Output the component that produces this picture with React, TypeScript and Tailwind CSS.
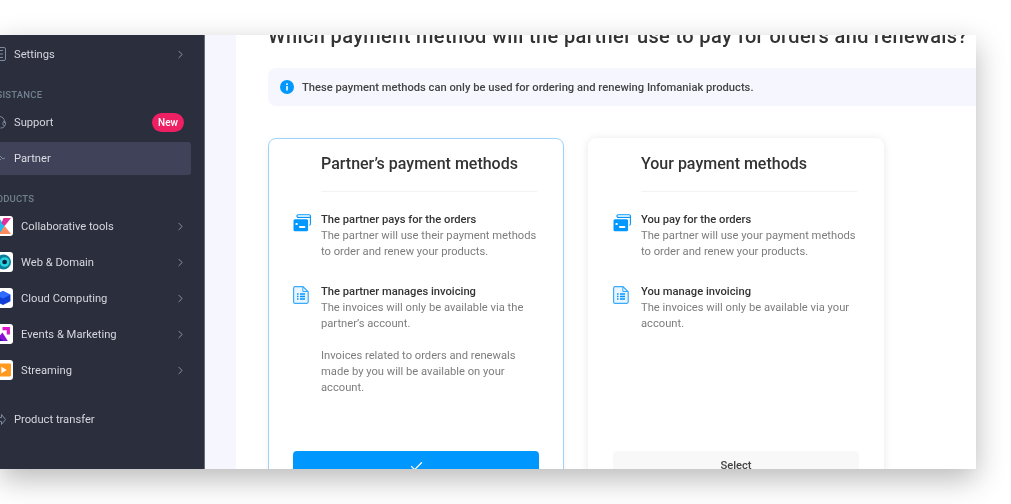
import { ChevronRight, Check } from 'lucide-react'

const font = { fontFamily: 'Roboto, "Liberation Sans", sans-serif' }

function CardsIcon() {
  return (
    <svg width="18" height="18" viewBox="0 0 18 18" fill="none">
      <path d="M4 3V2a1.2 1.2 0 0 1 1.2-1.2h11A1.2 1.2 0 0 1 17.4 2v8a1.2 1.2 0 0 1-1.2 1.2" stroke="#0098ff" strokeWidth="1.1" />
      <path d="M4 3.4h13" stroke="#0098ff" strokeWidth="1.2" />
      <rect x="0.5" y="5.2" width="14.6" height="12" rx="1.5" fill="#0098ff" />
      <rect x="2.6" y="9" width="2" height="2" fill="#fff" />
      <rect x="6.2" y="12" width="6" height="2" fill="#fff" />
    </svg>
  )
}

function InvoiceIcon() {
  return (
    <svg width="16" height="18" viewBox="0 0 16 18" fill="none">
      <path d="M2 .7h8l5.2 5v10.2a1.4 1.4 0 0 1-1.4 1.4H2a1.4 1.4 0 0 1-1.4-1.4V2.100A1.4 1.4 0 0 1 2 .7Z" fill="#eaf6ff" stroke="#3aaaff" strokeWidth="1.2" />
      <path d="M9.800 .9v4.600h5" stroke="#3aaaff" strokeWidth="1" />
      <path d="M4 8h1.500M7 8h5M4 10.500h1.500M7 10.500h5M4 13h1.500M7 13h5" stroke="#0098ff" strokeWidth="1.500" />
    </svg>
  )
}

function Tile({ children }: { children: React.ReactNode }) {
  return (
    <div className="flex h-5 w-5 shrink-0 items-center justify-center overflow-hidden rounded-[3px] bg-white">
      <svg width="16" height="16" viewBox="0 0 15 15">{children}</svg>
    </div>
  )
}

const products = [
  {
    label: 'Collaborative tools',
    icon: (
      <>
        <path d="M0 0h4l5 7.500-4 7.500H0l4-7.500z" fill="#22b8f0" />
        <path d="M4 15l5-7.500L15 15H9z" fill="#ff8a5c" />
        <path d="M9 7.500L15 0H8L6 5z" fill="#e0309a" />
      </>
    ),
  },
  {
    label: 'Web & Domain',
    icon: (
      <>
        <circle cx="8" cy="7.500" r="7" fill="#0a7f9a" />
        <circle cx="9" cy="7.500" r="4.500" fill="#27d3e0" />
        <circle cx="9" cy="7.500" r="2.200" fill="#13203a" />
      </>
    ),
  },
  {
    label: 'Cloud Computing',
    icon: (
      <>
        <path d="M7.500 1l7 3.500v6l-7 3.500-7-3.500v-6z" fill="#0f3fd6" />
        <path d="M7.500 1l7 3.500-7 3.500-7-3.500z" fill="#2f6bff" />
      </>
    ),
  },
  {
    label: 'Events & Marketing',
    icon: (
      <>
        <path d="M0 14L7 6l5 8z" fill="#8a10d8" />
        <path d="M0 14l3-4 5 4z" fill="#3a10a8" />
        <path d="M7 1h7v7h-3V4H7z" fill="#e014c8" />
      </>
    ),
  },
  {
    label: 'Streaming',
    icon: (
      <>
        <rect x="0" y="1.500" width="15" height="12" rx="1" fill="#ff9a1f" />
        <rect x="0" y="1.500" width="4" height="12" fill="#f0562a" />
        <path d="M6 4.500l5 3-5 3z" fill="#fff" />
      </>
    ),
  },
]

function SimpleRow({ label, children, glyph }: { label: string; children?: React.ReactNode; glyph: React.ReactNode }) {
  return (
    <div className="flex h-9 items-center pr-[17px] text-[11.2px] text-[#d5d7de]">
      <div className="mr-[8px] flex w-[6px] justify-end text-[#7f8a9c]">{glyph}</div>
      <span className="flex-1 whitespace-nowrap pt-[2px]">{label}</span>
      {children}
    </div>
  )
}

function Section({ title, lines, extra, icon }: { title: string; lines: string[]; extra?: string[]; icon: React.ReactNode }) {
  return (
    <div className="flex gap-[10px]">
      <div className="mt-[2px] w-[18px] shrink-0">{icon}</div>
      <div className="whitespace-nowrap text-[11.2px] leading-4 text-[#7d7d7d]">
        <div className="font-medium text-[#333]">{title}</div>
        {lines.map((l) => (
          <div key={l}>{l}</div>
        ))}
        {extra && (
          <div className="mt-4">
            {extra.map((l) => (
              <div key={l}>{l}</div>
            ))}
          </div>
        )}
      </div>
    </div>
  )
}

function Card({ title, selected, children }: { title: string; selected?: boolean; children: React.ReactNode }) {
  return (
    <div
      className={
        selected
          ? 'flex w-[296px] flex-col rounded-lg border border-[#9bd4fb] bg-white px-6 pb-6 pt-[15px] shadow-[0_1px_6px_rgba(0,0,0,0.05)]'
          : 'flex w-[296px] flex-col rounded-lg border border-white bg-white px-6 pb-6 pt-[15px] shadow-[0_1px_8px_rgba(0,0,0,0.1)]'
      }
    >
      <div className="ml-[28px] mr-[2px] h-[38px] border-b border-[#f3f3f3] text-[16px] font-medium leading-5 text-[#333]">{title}</div>
      <div className="mt-[20px] flex flex-col gap-[24px] pb-[55px]">{children}</div>
      {selected ? (
        <div className="mt-auto flex h-10 items-start justify-center rounded bg-[#0098ff] pt-[8px] text-white">
          <Check size={15} />
        </div>
      ) : (
        <div className="mt-auto flex h-10 items-start justify-center rounded bg-[#f8f8f8] pt-[7px] text-[11.2px] font-medium text-[#444]">Select</div>
      )}
    </div>
  )
}

export default function App() {
  return (
    <div className="h-[504px] w-[1011px] overflow-hidden bg-white pt-[35px]" style={font}>
      <div className="flex h-[434px] w-[976px] overflow-hidden shadow-[0_10px_28px_rgba(0,0,0,0.28)]">
        <aside className="w-[205px] shrink-0 overflow-hidden border-r border-[#6a6e7c] bg-[#2b2e3c] pt-px">
          <div className="blur-[0.5px]">
            <SimpleRow
              label="Settings"
              glyph={
                <svg width="10" height="14" viewBox="0 0 10 14" fill="none" className="shrink-0" stroke="#7f8a9c">
                  <rect x="0.500" y="0.500" width="9" height="13" rx="1.500" />
                  <path d="M3 3.500h4M3 7h4M3 10.500h4" />
                </svg>
              }
            >
              <ChevronRight size={13} strokeWidth={1.5} className="text-[#a4a8b4]" />
            </SimpleRow>
            <div className="flex h-8 items-end pb-[2px] text-[9.5px] font-medium tracking-[0.2px] text-[#71808f]">
              <span className="-ml-[16px]">ASSISTANCE</span>
            </div>
            <div className="pr-[3px]">
              <SimpleRow
                label="Support"
                glyph={
                  <svg width="13" height="14" viewBox="0 0 13 14" fill="none" className="shrink-0" stroke="#7f8a9c">
                    <path d="M1.500 8V6.500a5 5 0 0 1 10 0V8" />
                    <rect x="10" y="6.500" width="2.500" height="4" rx="1" />
                    <path d="M11.500 10.500c0 2-2 2.500-4 2.500" />
                  </svg>
                }
              >
                <span className="flex h-[19px] w-[32px] items-center justify-center rounded-full bg-[#ee1f63] text-[10px] font-medium text-white">New</span>
              </SimpleRow>
            </div>
            <div className="flex h-9 items-center pr-[13px]">
              <div className="flex h-[33px] flex-1 items-center rounded-r-[3px] bg-[#3f4259] pt-[2px] text-[11.2px] text-[#dcdee5]">
                <div className="mr-[8px] flex w-[6px] justify-end">
                  <svg width="12" height="10" viewBox="0 0 12 10" fill="none" className="shrink-0" stroke="#7f8a9c">
                    <path d="M1 2h5l3 3 2-1M1 8h3l3-3" />
                  </svg>
                </div>
                Partner
              </div>
            </div>
            <div className="flex h-8 items-end pb-[2px] text-[9.5px] font-medium tracking-[0.2px] text-[#71808f]">
              <span className="-ml-[16px]">PRODUCTS</span>
            </div>
            {products.map((p) => (
              <div key={p.label} className="flex h-9 items-center pr-[17px] text-[11.2px] text-[#d5d7de]">
                <div className="-ml-[7px] mr-[8px]">
                  <Tile>{p.icon}</Tile>
                </div>
                <span className="flex-1 whitespace-nowrap pt-[2px]">{p.label}</span>
                <ChevronRight size={13} strokeWidth={1.5} className="text-[#a4a8b4]" />
              </div>
            ))}
            <div className="mt-[13px]">
              <SimpleRow
                label="Product transfer"
                glyph={
                  <svg width="8" height="13" viewBox="0 0 8 13" fill="none" className="shrink-0" stroke="#7f8a9c">
                    <path d="M1 4.500h2.500V1.500L7.500 6.500l-4 5V8.500H1z" />
                  </svg>
                }
              />
            </div>
          </div>
        </aside>

        <main className="min-w-0 flex-1 overflow-hidden bg-[#f6f6fe] pl-[31px]">
          <div className="h-full overflow-hidden bg-white pl-8">
            <div className="blur-[0.5px]">
              <h1 className="-mt-[12px] h-[45px] whitespace-nowrap text-[20px] font-medium leading-[26px] tracking-[0.365px] text-[#333]">
                Which payment method will the partner use to pay for orders and renewals?
              </h1>
              <div className="-mr-[8px] flex h-[38px] items-center gap-[8px] rounded-lg bg-[#f6f6fe] pl-[12px] text-[11.2px] font-medium text-[#444]">
                <svg width="14" height="14" viewBox="0 0 14 14">
                  <circle cx="7" cy="7" r="7" fill="#0098ff" />
                  <rect x="6.200" y="6" width="1.600" height="4.500" fill="#fff" />
                  <rect x="6.200" y="3.400" width="1.600" height="1.600" fill="#fff" />
                </svg>
                <span className="pt-[2px]">These payment methods can only be used for ordering and renewing Infomaniak products.</span>
              </div>
              <div className="mt-8 flex gap-6">
                <Card title="Partner’s payment methods" selected>
                  <Section
                    icon={<CardsIcon />}
                    title="The partner pays for the orders"
                    lines={['The partner will use their payment methods', 'to order and renew your products.']}
                  />
                  <Section
                    icon={<InvoiceIcon />}
                    title="The partner manages invoicing"
                    lines={['The invoices will only be available via the', 'partner’s account.']}
                    extra={['Invoices related to orders and renewals', 'made by you will be available on your', 'account.']}
                  />
                </Card>
                <Card title="Your payment methods">
                  <Section
                    icon={<CardsIcon />}
                    title="You pay for the orders"
                    lines={['The partner will use your payment methods', 'to order and renew your products.']}
                  />
                  <Section
                    icon={<InvoiceIcon />}
                    title="You manage invoicing"
                    lines={['The invoices will only be available via your', 'account.']}
                  />
                </Card>
              </div>
            </div>
          </div>
        </main>
      </div>
    </div>
  )
}
